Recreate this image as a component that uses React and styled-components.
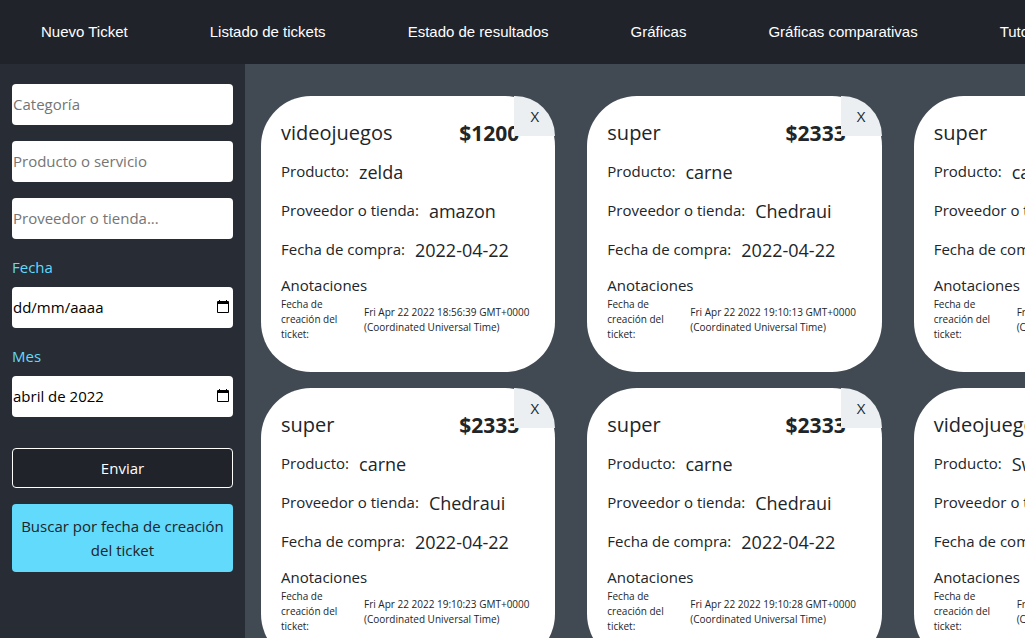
import React from "react";
import styled, { createGlobalStyle } from "styled-components";

const GlobalStyle = createGlobalStyle`
  *, *::before, *::after { box-sizing: border-box; }
  html, body, #root { height: 100%; }
  body {
    margin: 0;
    overflow: hidden;
    background: #282c34;
    color: #212529;
    font: 400 15px/24px "Open Sans", "Noto Sans", sans-serif;
  }
  button, input { font: inherit; color: inherit; }
  h2, p, dl, dd { margin: 0; font-weight: 400; }
`;

const Page = styled.div`
  height: 100%;
  display: flex;
  flex-direction: column;
`;

const NavBar = styled.nav`
  flex: none;
  display: flex;
  align-items: center;
  height: 64px;
  overflow: hidden;
  background: #20232a;
`;

const NavLink = styled.a`
  flex: none;
  padding: 0 4vw;
  color: #fff;
  font-family: "Liberation Sans", Arial, sans-serif;
  text-decoration: none;
`;

const Content = styled.div`
  flex: 1;
  min-height: 0;
  display: flex;
`;

const Sidebar = styled.form`
  flex: none;
  width: 245px;
  padding: 20px 12px;
  display: flex;
  flex-direction: column;
  gap: 16px;
  background: #282c34;
`;

const Field = styled.label`
  display: flex;
  flex-direction: column;
  gap: 8px;
  color: #61dafb;
`;

const TextInput = styled.input`
  width: 100%;
  height: 41px;
  padding: 0 ${(p) => (p.$withIcon ? "32px" : "1px")} 2px 1px;
  border: 0;
  border-radius: 4px;
  background: #fff;
  color: #000;
  &::placeholder { color: ${(p) => (p.$withIcon ? "#000" : "#757575")}; opacity: 1; }
`;

const PickerBox = styled.span`
  position: relative;
  display: block;
`;

const CalendarIcon = styled.svg`
  position: absolute;
  top: 12px;
  right: 3px;
  width: 14px;
  height: 15px;
`;

const Actions = styled.div`
  display: flex;
  flex-direction: column;
  gap: 16px;
  padding-top: 15px;
`;

const ActionButton = styled.button`
  min-height: 40px;
  padding: ${(p) => (p.$primary ? "10px 8px" : "7px 8px")};
  border: ${(p) => (p.$primary ? "0" : "1px solid #fff")};
  border-radius: 4px;
  background: ${(p) => (p.$primary ? "#61dafb" : "#20232a")};
  color: ${(p) => (p.$primary ? "#20232a" : "#fff")};
`;

const Board = styled.main`
  flex: 1;
  min-width: 0;
  overflow: hidden;
  padding: 32px 16px;
  display: grid;
  grid-template-columns: repeat(3, calc((100vw - 142px) / 3));
  grid-auto-rows: max-content;
  gap: 16px 32px;
  background: #414a52;
`;

const Card = styled.article`
  position: relative;
  min-height: 276px;
  padding: 21px 20px 24px;
  border-radius: 50px;
  background: #fff;
`;

const CardHead = styled.header`
  display: flex;
  justify-content: space-between;
  padding-right: 16px;
  line-height: 32px;
`;

const Category = styled.h2`
  font-size: 20px;
`;

const Price = styled.strong`
  font-size: 21px;
  font-weight: 700;
`;

const CloseButton = styled.button`
  position: absolute;
  top: 0;
  right: 0;
  width: 41px;
  height: 40px;
  padding: 0;
  border: 0;
  border-radius: 0 40px 0 0;
  background: #ebeff2;
`;

const Details = styled.dl`
  padding: 3px 0 4px;
`;

const Detail = styled.div`
  display: flex;
  gap: 10px;
  height: 39px;
  line-height: 38px;
  white-space: nowrap;
`;

const Value = styled.dd`
  font-size: 18px;
  line-height: 40px;
`;

const Created = styled.p`
  display: flex;
  align-items: center;
  gap: 16px;
  font-size: 10px;
  line-height: 15px;
`;

const CreatedLabel = styled.span`
  flex: none;
  width: 67px;
`;

const links = ["Nuevo Ticket", "Listado de tickets", "Estado de resultados", "Gráficas", "Gráficas comparativas", "Tutorial"];

const tickets = [
  ["videojuegos", "$1200", "zelda", "amazon", "18:56:39"],
  ["super", "$2333", "carne", "Chedraui", "19:10:13"],
  ["super", "$2333", "carne", "Chedraui", "19:10:18"],
  ["super", "$2333", "carne", "Chedraui", "19:10:23"],
  ["super", "$2333", "carne", "Chedraui", "19:10:28"],
  ["videojuegos", "$7000", "Switch", "amazon", "19:12:40"],
];

function PickerField({ label, ...props }) {
  return (
    <Field>
      {label}
      <PickerBox>
        <TextInput $withIcon {...props} />
        <CalendarIcon viewBox="0 0 14 15" aria-hidden="true">
          <path
            fillRule="evenodd"
            fill="#000"
            d="M3 1h1v1h6V1h1v1h1a1 1 0 0 1 1 1v10a1 1 0 0 1-1 1H2a1 1 0 0 1-1-1V3a1 1 0 0 1 1-1h1zM2 5v8h10V5z"
          />
        </CalendarIcon>
      </PickerBox>
    </Field>
  );
}

function Ticket({ data: [category, price, product, store, time] }) {
  return (
    <Card>
      <CardHead>
        <Category>{category}</Category>
        <Price>{price}</Price>
      </CardHead>
      <CloseButton type="button">X</CloseButton>
      <Details>
        <Detail><dt>Producto:</dt><Value>{product}</Value></Detail>
        <Detail><dt>Proveedor o tienda:</dt><Value>{store}</Value></Detail>
        <Detail><dt>Fecha de compra:</dt><Value>2022-04-22</Value></Detail>
      </Details>
      <p>Anotaciones</p>
      <Created>
        <CreatedLabel>Fecha de creación del ticket:</CreatedLabel>
        <span>{`Fri Apr 22 2022 ${time} GMT+0000 (Coordinated Universal Time)`}</span>
      </Created>
    </Card>
  );
}

export default function App() {
  return (
    <Page>
      <GlobalStyle />
      <NavBar>
        {links.map((text) => <NavLink key={text} href="#">{text}</NavLink>)}
      </NavBar>
      <Content>
        <Sidebar onSubmit={(e) => e.preventDefault()}>
          <TextInput aria-label="Categoría" placeholder="Categoría" />
          <TextInput aria-label="Producto o servicio" placeholder="Producto o servicio" />
          <TextInput aria-label="Proveedor o tienda" placeholder="Proveedor o tienda..." />
          <PickerField label="Fecha" placeholder="dd/mm/aaaa" />
          <PickerField label="Mes" defaultValue="abril de 2022" />
          <Actions>
            <ActionButton type="submit">Enviar</ActionButton>
            <ActionButton type="button" $primary>Buscar por fecha de creación del ticket</ActionButton>
          </Actions>
        </Sidebar>
        <Board>
          {tickets.map((t) => <Ticket key={t[4]} data={t} />)}
        </Board>
      </Content>
    </Page>
  );
}
